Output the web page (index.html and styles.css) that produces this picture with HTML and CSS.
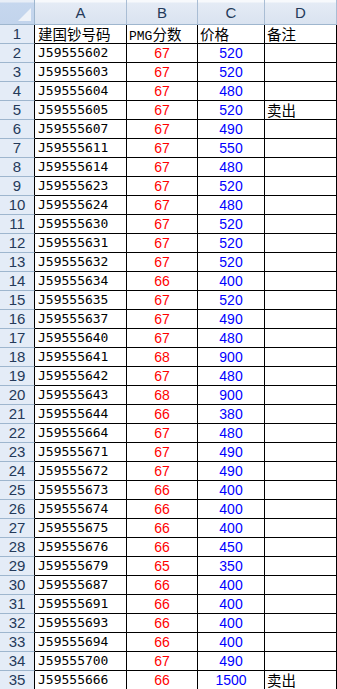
FILE: index.html
```html
<!DOCTYPE html>
<html lang="zh-CN">
<head>
<meta charset="utf-8">
<title>Sheet</title>
<link rel="stylesheet" href="styles.css">
</head>
<body>
<div class="sheet" id="sheet">
  <div class="corner"><span class="tri"></span></div>
  <div class="colh">A</div>
  <div class="colh">B</div>
  <div class="colh">C</div>
  <div class="colh last">D</div>

  <div class="rowh">1</div>
  <div class="cell a cjk">建国钞号码</div>
  <div class="cell cjk"><span class="mono">PMG</span>分数</div>
  <div class="cell cjk">价格</div>
  <div class="cell cjk">备注</div>
</div>
<script src="script.js"></script>
</body>
</html>
```
FILE: script.js
```js
var data = [
["J59555602",67,520,""],["J59555603",67,520,""],["J59555604",67,480,""],["J59555605",67,520,"卖出"],
["J59555607",67,490,""],["J59555611",67,550,""],["J59555614",67,480,""],["J59555623",67,520,""],
["J59555624",67,480,""],["J59555630",67,520,""],["J59555631",67,520,""],["J59555632",67,520,""],
["J59555634",66,400,""],["J59555635",67,520,""],["J59555637",67,490,""],["J59555640",67,480,""],
["J59555641",68,900,""],["J59555642",67,480,""],["J59555643",68,900,""],["J59555644",66,380,""],
["J59555664",67,480,""],["J59555671",67,490,""],["J59555672",67,490,""],["J59555673",66,400,""],
["J59555674",66,400,""],["J59555675",66,400,""],["J59555676",66,450,""],["J59555679",65,350,""],
["J59555687",66,400,""],["J59555691",66,400,""],["J59555693",66,400,""],["J59555694",66,400,""],
["J59555700",67,490,""],["J59555666",66,1500,"卖出"]
];
var s = document.getElementById("sheet");
var html = "";
for (var i = 0; i < data.length; i++) {
  var r = data[i];
  html += '<div class="rowh">' + (i + 2) + '</div>' +
    '<div class="cell a code">' + r[0] + '</div>' +
    '<div class="cell num red">' + r[1] + '</div>' +
    '<div class="cell num blue">' + r[2] + '</div>' +
    '<div class="cell cjk">' + r[3] + '</div>';
}
s.insertAdjacentHTML("beforeend", html);
```
FILE: styles.css
```css
html, body {
  margin: 0;
  padding: 0;
  background: #fff;
  overflow: hidden;
}
.sheet {
  display: grid;
  grid-template-columns: 35px 92px 71px 67px 72px;
  grid-template-rows: 25px;
  grid-auto-rows: 19px;
  width: 337px;
}
.corner {
  position: relative;
  background: linear-gradient(#e8eef7 0, #e8eef7 2px, #c6d7ee 3px, #c2d4ec 100%);
  border-right: 1px solid #9eb6ce;
  border-bottom: 1px solid #9eb6ce;
  box-sizing: border-box;
}
.tri {
  position: absolute;
  right: 3px;
  bottom: 3px;
  width: 0;
  height: 0;
  border-left: 13px solid transparent;
  border-bottom: 13px solid #eef2f8;
}
.colh {
  box-sizing: border-box;
  background: linear-gradient(#f7f9fc 0, #f7f9fc 2px, #e4ebf5 3px, #dae3f0 100%);
  border-right: 1px solid #a9bdd4;
  border-bottom: 1px solid #9eb6ce;
  font-family: "Liberation Sans", Arial, sans-serif;
  font-size: 15px;
  color: #243a5a;
  text-align: center;
  line-height: 23px;
  padding-top: 1px;
}
.rowh {
  box-sizing: border-box;
  background: #e4ecf7;
  border-right: 1px solid #000;
  border-bottom: 1px solid #9eb6ce;
  font-family: "Liberation Sans", Arial, sans-serif;
  font-size: 15px;
  color: #243a5a;
  text-align: center;
  line-height: 18px;
}
.cell {
  box-sizing: border-box;
  border-right: 1px solid #000;
  border-bottom: 1px solid #000;
  white-space: nowrap;
  padding-left: 2px;
  line-height: 18px;
  color: #000;
  min-width: 0;
}
.cell.a { padding-left: 3px; }
.cjk {
  font-family: "Noto Sans CJK SC", "DejaVu Sans Mono", sans-serif;
  font-size: 14.5px;
  line-height: 18px;
}
.mono {
  font-family: "Liberation Mono", monospace;
  font-size: 13px;
}
.code {
  font-family: "DejaVu Sans Mono", monospace;
  font-size: 13px;
}
.num {
  font-family: "Liberation Sans", Arial, sans-serif;
  font-size: 14px;
  text-align: center;
  padding-left: 0;
}
.red { color: #ff0000; }
.blue { color: #0000ff; }
```
